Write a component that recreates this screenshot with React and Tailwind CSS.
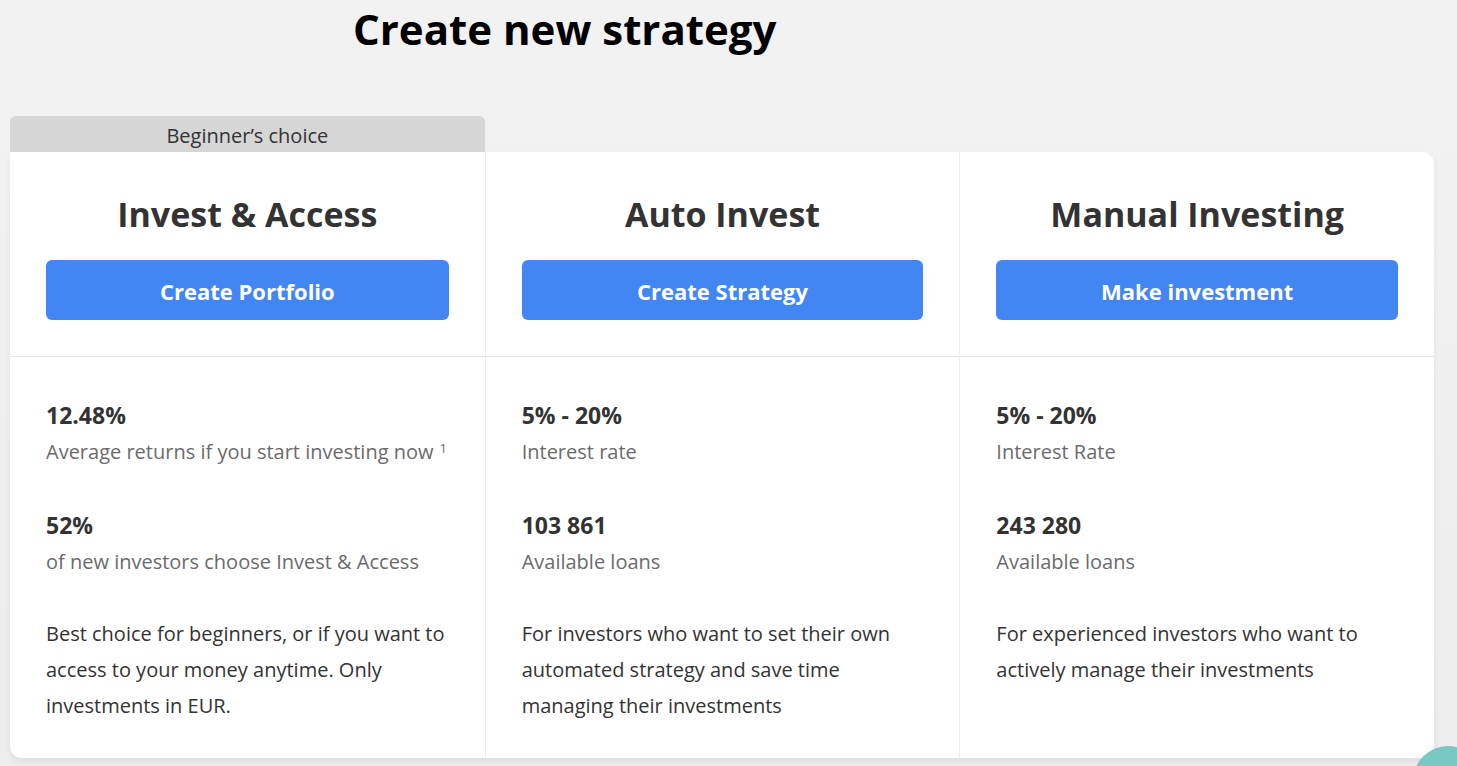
import React from "react";

const cols = [
  {
    title: "Invest & Access",
    button: "Create Portfolio",
    stats: [
      { value: "12.48%", label: "Average returns if you start investing now", sup: "1" },
      { value: "52%", label: "of new investors choose Invest & Access" },
    ],
    desc: "Best choice for beginners, or if you want to access to your money anytime. Only investments in EUR.",
  },
  {
    title: "Auto Invest",
    button: "Create Strategy",
    stats: [
      { value: "5% - 20%", label: "Interest rate" },
      { value: "103 861", label: "Available loans" },
    ],
    desc: "For investors who want to set their own automated strategy and save time managing their investments",
  },
  {
    title: "Manual Investing",
    button: "Make investment",
    stats: [
      { value: "5% - 20%", label: "Interest Rate" },
      { value: "243 280", label: "Available loans" },
    ],
    desc: "For experienced investors who want to actively manage their investments",
  },
];

export default function App() {
  return (
    <div className="relative h-[766px] overflow-hidden bg-gradient-to-b from-[#f2f2f2] to-[#ededed] font-['Open_Sans',sans-serif] text-[#333]">
      <h1 className="pl-[353px] pt-[1px] text-[42px] font-bold leading-[56px] text-black">
        Create new strategy
      </h1>
      <div className="mt-[59px] w-[1424px] ml-[10px]">
        <div className="grid grid-cols-3">
          <div className="flex h-[36px] items-center justify-center rounded-t-[6px] bg-[#d6d6d6] pt-[3px] text-[20px] text-[#333]">
            Beginner’s choice
          </div>
        </div>
        <div className="grid grid-cols-3 rounded-b-[12px] rounded-tr-[12px] bg-white shadow-[0_4px_6px_rgba(0,0,0,0.06)]">
          {cols.map((c, i) => (
            <div key={i} className={"flex flex-col " + (i > 0 ? "border-l border-[#ececec]" : "")}>
              <div className="flex flex-col items-center border-b border-[#e6e6e6] px-[36px] pt-[39px] pb-[36px]">
                <h2 className="text-[34px] font-bold leading-[46px] text-[#333]">{c.title}</h2>
                <button className="mt-[23px] h-[60px] w-full rounded-[6px] bg-[#4286f4] pt-[2px] text-[22px] font-bold text-white">
                  {c.button}
                </button>
              </div>
              <div className="px-[36px] pt-[43px] pb-[34px]">
                {c.stats.map((s, j) => (
                  <div key={j} className={j > 0 ? "mt-[44px]" : ""}>
                    <div className="text-[23px] font-bold leading-[30px] text-[#333]">{s.value}</div>
                    <div className="mt-[8px] text-[20px] leading-[28px] text-[#6b6b6b]">
                      {s.label}
                      {s.sup && <sup className="ml-[6px] text-[13px]">{s.sup}</sup>}
                    </div>
                  </div>
                ))}
                <p className="mt-[40px] text-[20px] leading-[36px] text-[#333]">{c.desc}</p>
              </div>
            </div>
          ))}
        </div>
      </div>
      <div className="absolute left-[1413px] top-[746px] h-[70px] w-[70px] rounded-full bg-[#78c9c4]" />
    </div>
  );
}
